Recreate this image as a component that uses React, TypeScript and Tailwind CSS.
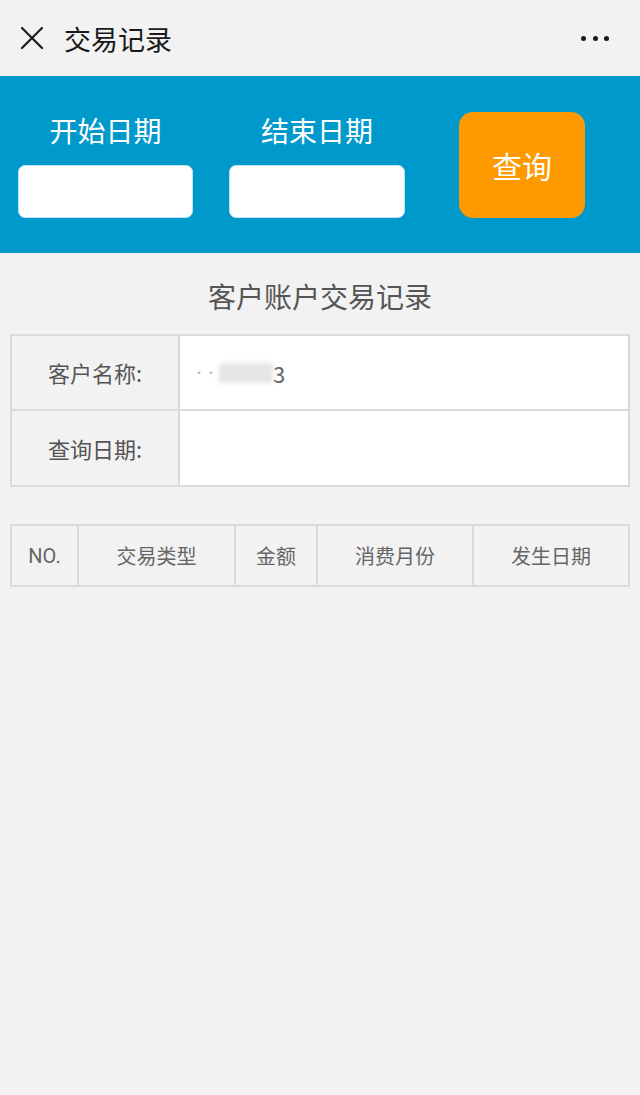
import React from "react";

const font = { fontFamily: '"Noto Sans CJK SC", Roboto, "Noto Sans", sans-serif' };

export default function App() {
  return (
    <div className="min-h-[1095px] w-[640px] bg-[#f2f2f2]" style={font}>
      {/* top bar */}
      <div className="flex h-[76px] items-center bg-[#f2f2f2]">
        <svg className="ml-[21px]" width="22" height="22" viewBox="0 0 22 22">
          <path d="M1 1 L21 21 M21 1 L1 21" stroke="#1a1a1a" strokeWidth="2.2" strokeLinecap="round" fill="none" />
        </svg>
        <div className="ml-[21px] text-[27px] leading-none text-[#1a1a1a]">交易记录</div>
        <div className="ml-auto mr-[31px] flex items-center gap-[6.5px]">
          <span className="h-[5px] w-[5px] rounded-full bg-[#1a1a1a]" />
          <span className="h-[5px] w-[5px] rounded-full bg-[#1a1a1a]" />
          <span className="h-[5px] w-[5px] rounded-full bg-[#1a1a1a]" />
        </div>
      </div>

      {/* blue query band */}
      <div className="flex items-start bg-[#0099cc] pb-[35px] pl-[18px] pt-[36px]">
        <div className="flex w-[175px] flex-col">
          <div className="h-[36px] text-center text-[28px] leading-[36px] text-white">开始日期</div>
          <div className="mt-[17px] h-[53px] rounded-[7px] border border-[#bfe3f0] bg-white" />
        </div>
        <div className="ml-[36px] flex w-[176px] flex-col">
          <div className="h-[36px] text-center text-[28px] leading-[36px] text-white">结束日期</div>
          <div className="mt-[17px] h-[53px] rounded-[7px] border border-[#bfe3f0] bg-white" />
        </div>
        <button className="ml-[54px] flex h-[106px] w-[126px] items-center justify-center rounded-[14px] bg-[#ff9900] text-[30px] text-white">
          查询
        </button>
      </div>

      {/* title */}
      <div className="pb-[21px] pt-[26px] text-center text-[28px] leading-[34px] text-[#555555]">
        客户账户交易记录
      </div>

      {/* info table */}
      <div className="mx-[10px] border-2 border-[#dadada] bg-white">
        <div className="flex h-[75px] border-b-2 border-[#dadada]">
          <div className="flex w-[166px] items-center justify-center bg-[#f2f2f2] text-[22px] text-[#555555]">
            客户名称:
          </div>
          <div className="flex flex-1 items-center border-l-2 border-[#dadada] pl-[13px]">
            <span className="text-[12px] leading-none text-[#bbbbbb]">··</span>
            <span className="ml-[2px] h-[20px] w-[54px] bg-[#e6e6e6] blur-[2px]" />
            <span className="text-[22px] leading-none text-[#666666]">3</span>
          </div>
        </div>
        <div className="flex h-[74px]">
          <div className="flex w-[166px] items-center justify-center bg-[#f2f2f2] text-[22px] text-[#555555]">
            查询日期:
          </div>
          <div className="flex-1 border-l-2 border-[#dadada]" />
        </div>
      </div>

      {/* records header */}
      <div className="mx-[10px] mt-[37px] grid h-[63px] grid-cols-[65px_157px_82px_156px_1fr] border-2 border-[#dadada] bg-[#f2f2f2] text-[20px] text-[#666666]">
        <div className="flex items-center justify-center" style={{ fontFamily: "Roboto, sans-serif" }}>NO.</div>
        <div className="flex items-center justify-center border-l-2 border-[#dadada]">交易类型</div>
        <div className="flex items-center justify-center border-l-2 border-[#dadada]">金额</div>
        <div className="flex items-center justify-center border-l-2 border-[#dadada]">消费月份</div>
        <div className="flex items-center justify-center border-l-2 border-[#dadada]">发生日期</div>
      </div>
    </div>
  );
}
